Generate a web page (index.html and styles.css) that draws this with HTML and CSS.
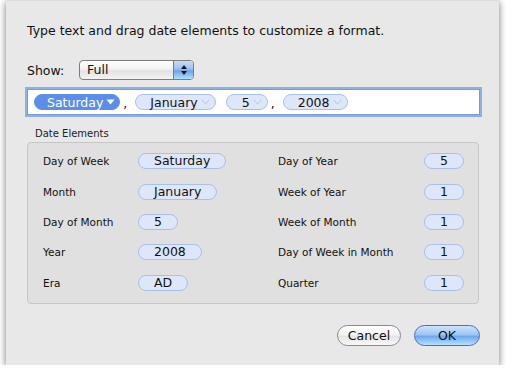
FILE: index.html
```html
<!DOCTYPE html>
<html lang="en">
<head>
  <meta charset="UTF-8">
  <title>Date Format</title>
  <link rel="stylesheet" href="styles.css">
</head>
<body>
  <div class="sheet">
    <p class="intro">Type text and drag date elements to customize a format.</p>

    <div class="show-row">
      <span class="show-label">Show:</span>
      <div class="popup">
        <span class="popup-value">Full</span>
        <span class="popup-arrows">
          <svg width="8" height="12" viewBox="0 0 8 12">
            <path d="M4 1 L7 5 L1 5 Z" fill="#1a1a1a"/>
            <path d="M4 11 L7 7 L1 7 Z" fill="#1a1a1a"/>
          </svg>
        </span>
      </div>
    </div>

    <div class="format-field">
      <span class="token selected">Saturday<svg class="caret" width="9" height="6" viewBox="0 0 9 6"><path d="M0.5 0.5 L8.5 0.5 L4.5 5.5 Z" fill="white"/></svg></span><span class="sep">,</span>
      <span class="token">January<svg class="caret" width="9" height="6" viewBox="0 0 9 6"><path d="M1 1 L4.5 5 L8 1" fill="none" stroke="#b9c6dc" stroke-width="1"/></svg></span>
      <span class="token">5<svg class="caret" width="9" height="6" viewBox="0 0 9 6"><path d="M1 1 L4.5 5 L8 1" fill="none" stroke="#b9c6dc" stroke-width="1"/></svg></span><span class="sep">,</span>
      <span class="token">2008<svg class="caret" width="9" height="6" viewBox="0 0 9 6"><path d="M1 1 L4.5 5 L8 1" fill="none" stroke="#b9c6dc" stroke-width="1"/></svg></span>
    </div>

    <div class="group-title">Date Elements</div>
    <div class="group">
      <span class="label">Day of Week</span>
      <span class="cell"><span class="pill">Saturday</span></span>
      <span class="label">Day of Year</span>
      <span class="cell"><span class="pill">5</span></span>

      <span class="label">Month</span>
      <span class="cell"><span class="pill">January</span></span>
      <span class="label">Week of Year</span>
      <span class="cell"><span class="pill">1</span></span>

      <span class="label">Day of Month</span>
      <span class="cell"><span class="pill">5</span></span>
      <span class="label">Week of Month</span>
      <span class="cell"><span class="pill">1</span></span>

      <span class="label">Year</span>
      <span class="cell"><span class="pill">2008</span></span>
      <span class="label">Day of Week in Month</span>
      <span class="cell"><span class="pill">1</span></span>

      <span class="label">Era</span>
      <span class="cell"><span class="pill">AD</span></span>
      <span class="label">Quarter</span>
      <span class="cell"><span class="pill">1</span></span>
    </div>

    <div class="buttons">
      <button class="btn cancel">Cancel</button>
      <button class="btn ok">OK</button>
    </div>
  </div>
</body>
</html>
```

FILE: styles.css
```css
body {
  margin: 0;
  background-color: white;
  font-family: "DejaVu Sans", sans-serif;
  color: #111;
}

.sheet {
  margin-left: 6px;
  width: 493px;
  height: 365px;
  box-sizing: border-box;
  padding: 22px 19px 0 21px;
  background-color: #e8e8e8;
  box-shadow: 0 2px 7px rgba(0, 0, 0, 0.55);
  border-top: 1px solid #dcdcdc;
}

.intro {
  margin: 0;
  font-size: 12.5px;
  line-height: 16px;
}

.show-row {
  display: flex;
  align-items: center;
  margin-top: 21px;
  height: 20px;
  font-size: 12.5px;
}

.show-label {
  width: 52px;
}

.popup {
  display: flex;
  width: 115px;
  height: 20px;
  box-sizing: border-box;
  border: 1px solid #7d7d7d;
  border-radius: 4px;
  background: linear-gradient(#ffffff, #f2f2f2 45%, #e2e2e2 55%, #f4f4f4);
  overflow: hidden;
}

.popup-value {
  flex: 1;
  padding-left: 7px;
  line-height: 18px;
}

.popup-arrows {
  width: 19px;
  display: flex;
  align-items: center;
  justify-content: center;
  border-left: 1px solid #5a7fc0;
  background: linear-gradient(#c9dcf6, #9cc1f0 45%, #6ea2ea 55%, #aee0ff);
}

.format-field {
  display: flex;
  align-items: center;
  margin-top: 9px;
  height: 26px;
  box-sizing: border-box;
  padding: 0 6px;
  background-color: white;
  border: 1px solid #7a9cd4;
  box-shadow: 0 0 0 2px #8fb0e2;
  font-size: 12.5px;
}

.token {
  display: flex;
  align-items: center;
  justify-content: flex-end;
  min-width: 42px;
  height: 16px;
  box-sizing: border-box;
  padding: 0 5px 0 14px;
  margin-right: 10px;
  border: 1px solid #a9c0ea;
  border-radius: 8px;
  background-color: #dee7f9;
  color: #111;
}

.token.selected {
  padding: 0 4px 0 12px;
  background-color: #5c8ee8;
  border-color: #5c8ee8;
  color: white;
}

.caret {
  margin-left: 3px;
}

.sep {
  margin: 3px 8px 0 -7px;
}

.group-title {
  margin: 12px 0 0 8px;
  font-size: 10px;
  line-height: 14px;
  color: #222;
}

.group {
  display: grid;
  grid-template-columns: 95px 140px 146px 40px;
  grid-auto-rows: 30.4px;
  align-items: center;
  width: 452px;
  height: 162px;
  box-sizing: border-box;
  margin-top: 1px;
  padding: 3px 16px 0 15px;
  background-color: #e0e0e0;
  border: 1px solid #c6c6c6;
  border-radius: 4px;
}

.label {
  font-size: 10.5px;
}

.cell {
  display: flex;
}

.pill {
  min-width: 40px;
  height: 16px;
  box-sizing: border-box;
  padding: 0 15px;
  border: 1px solid #a9c0ea;
  border-radius: 8px;
  background-color: #dee7f9;
  font-size: 12.5px;
  line-height: 14px;
  text-align: center;
}

.buttons {
  display: flex;
  justify-content: flex-end;
  gap: 13px;
  margin-top: 21px;
}

.btn {
  height: 21px;
  padding: 0;
  border-radius: 11px;
  font-family: "DejaVu Sans", sans-serif;
  font-size: 12.5px;
  color: #111;
}

.cancel {
  width: 64px;
  border: 1px solid #8a8a8a;
  background: linear-gradient(#ffffff, #f3f3f3 45%, #e4e4e4 55%, #fafafa);
}

.ok {
  width: 66px;
  border: 1px solid #4d6fb8;
  background: linear-gradient(#cfe3fb, #9ec6f4 45%, #6ea8ee 55%, #b6e2ff);
}
```
